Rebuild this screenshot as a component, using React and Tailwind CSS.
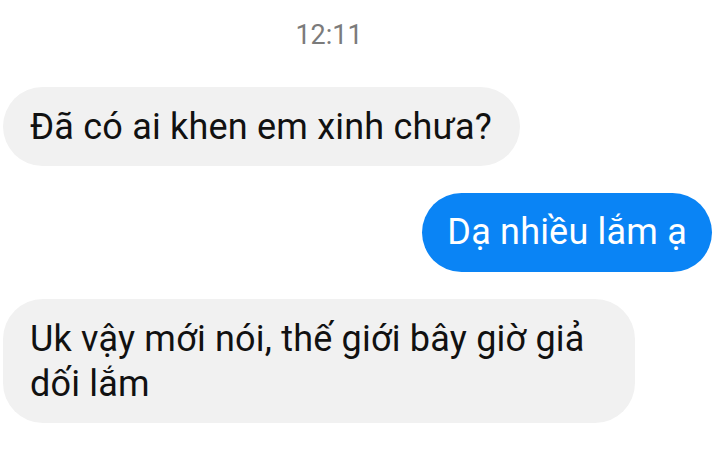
const messages = [
  { from: "them", text: "Đã có ai khen em xinh chưa?" },
  { from: "me", text: "Dạ nhiều lắm ạ" },
  { from: "them", text: "Uk vậy mới nói, thế giới bây giờ giả dối lắm" },
];

export default function App() {
  return (
    <div
      className="w-[720px] h-[453px] bg-white overflow-hidden"
      style={{ fontFamily: "Roboto, 'Noto Sans', sans-serif" }}
    >
      {/* Timestamp */}
      <div className="flex justify-center pr-[62px] pt-[22px]">
        <span className="text-[27px] leading-[27px] text-[#7b7b7b]">12:11</span>
      </div>

      {/* Thread */}
      <div className="flex flex-col gap-[27px] pt-[38px] pl-[3px] pr-[8px]">
        {messages.map((m, i) =>
          m.from === "me" ? (
            <div key={i} className="flex justify-end">
              <div className="rounded-full bg-[#0a84f5] text-white text-[36px] leading-[45px] tracking-[0.2px] py-[17px] px-[25px]">
                {m.text}
              </div>
            </div>
          ) : (
            <div key={i} className="flex justify-start">
              <div className="max-w-[632px] rounded-[40px] bg-[#f1f1f1] text-[#111111] text-[36px] leading-[45px] tracking-[0.2px] pt-[18px] pb-[16px] pl-[27px] pr-[28px]">
                {m.text}
              </div>
            </div>
          )
        )}
      </div>
    </div>
  );
}
